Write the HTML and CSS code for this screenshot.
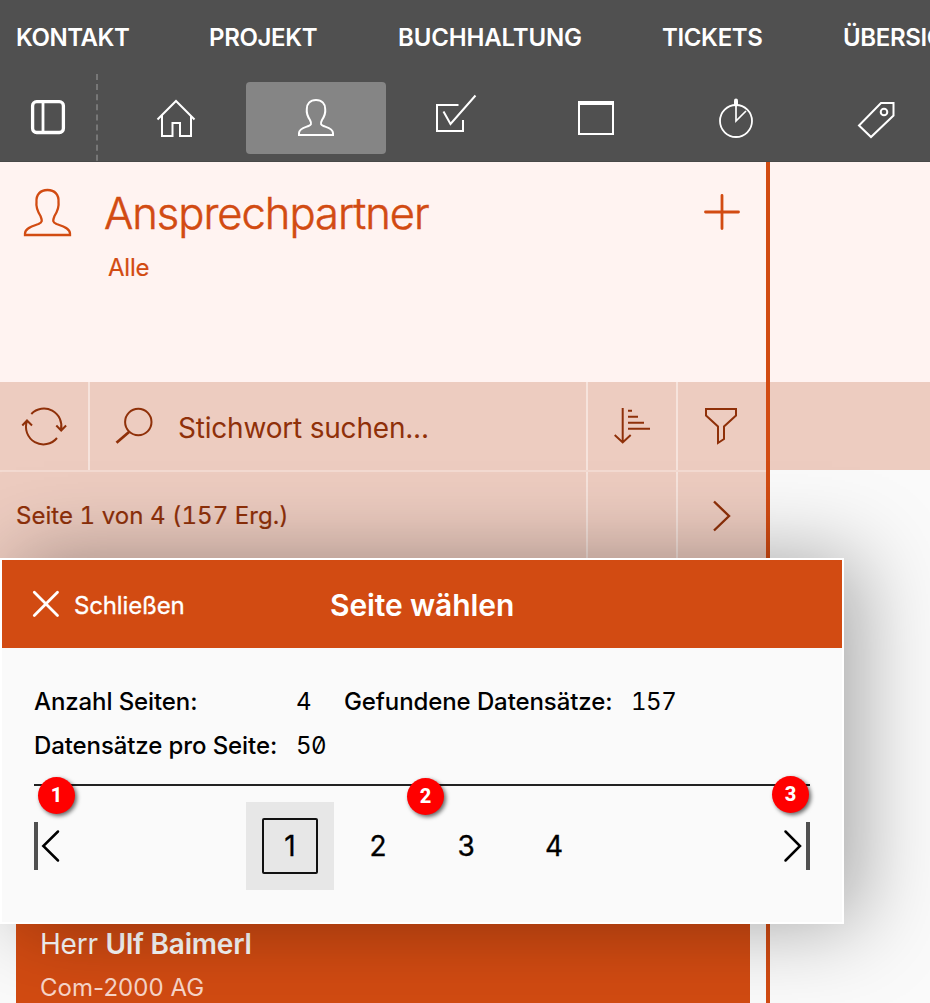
FILE: index.html
```html
<!DOCTYPE html>
<html lang="de">
<head>
<meta charset="utf-8">
<title>Ansprechpartner</title>
<link rel="stylesheet" href="styles.css">
</head>
<body>
<div class="app">
  <header class="topbar">
    <nav class="menu">
      <span class="menu-item kontakt">KONTAKT</span><span class="menu-item projekt">PROJEKT</span><span class="menu-item buchhaltung">BUCHHALTUNG</span><span class="menu-item tickets">TICKETS</span><span class="menu-item">ÜBERSICHT</span>
    </nav>
    <div class="tools">
      <div class="tool-side">
        <svg width="96" height="88" viewBox="0 74 96 88"><rect x="32.6" y="101.700" width="30.800" height="30.800" rx="4" stroke-width="3.300"/><path d="M43 102v30" stroke-width="2.800"/></svg>
      </div>
      <svg class="dashes" width="2" height="88"><path d="M1 0V88" stroke-dasharray="6 4.100"/></svg>
      <div class="tool"><svg viewBox="106 82 140 72"><path d="M157.500 119.500 176 101l18.500 18.500M162 115.500V136h10.500v-13h7.500v13H191v-20.500"/></svg></div>
      <div class="tool active"><svg viewBox="246 82 140 72"><path d="M316 100c-6 0-9.400 4-9.200 9-.5 4 1.200 8 3.200 11 2 4 1 5-1.500 6-4 1.500-9.500 2.700-9.500 7v2h34v-2c0-4.300-5.500-5.500-9.500-7-2.500-1-3.500-2-1.500-6 2-3 3.700-7 3.200-11 .2-5-3.200-9-9.200-9z"/></svg></div>
      <div class="tool"><svg viewBox="386 82 140 72"><path d="M458.500 105H437v26h26v-11M443.500 111.500l7 12.500 25-28.500"/></svg></div>
      <div class="tool"><svg viewBox="526 82 140 72"><path d="M579 102h34v32h-34zM578 103.500h36" /><path d="M578 103h36" stroke-width="4"/></svg></div>
      <div class="tool"><svg viewBox="666 82 140 72"><circle cx="736" cy="121" r="16" stroke-width="1.800"/><path d="M736 105v16l10-10" stroke-width="1.700"/><path d="M736 100.500v4" stroke-width="4" stroke-linecap="round"/></svg></div>
      <div class="tool"><svg viewBox="806 82 140 72"><path d="M881 103h12.500v12.500L871 137l-12-11.500z"/><circle cx="884" cy="112" r="3.300"/></svg></div>
    </div>
  </header>
  <main class="main">
    <section class="list">
      <div class="list-head">
        <svg class="person" width="96" height="90" viewBox="0 162 96 90"><path d="M47.500 190c-7.500 0-11.500 5-11 12-.7 5 1.500 10 4 14 2 5 2 6-2 8-5.500 2-13.500 4-13.500 9.500v1.500h45v-1.500c0-5.500-8-7.500-13.500-9.500-4-2-4-3-2-8 2.500-4 4.700-9 4-14 .5-7-3.500-12-11-12z"/></svg>
        <div class="titles"><h1 class="title">Ansprechpartner</h1><div class="subtitle">Alle</div></div>
        <svg class="plus" width="62" height="100" viewBox="704 162 62 100"><path d="M705.500 212h33M722 195.500v33"/></svg>
      </div>
      <div class="toolbar">
        <div class="cell"><svg width="88" height="88" viewBox="0 382 88 88"><path d="M31.300 414A17.500 17.500 0 0 1 61 430M56.300 425.500l4.900 5 4.900-5M57 438A17.500 17.500 0 0 1 27 421M22.300 425.500l4.700-5 5 5"/></svg></div>
        <div class="cell search"><svg width="88" height="88" viewBox="90 382 88 88"><circle cx="138.300" cy="422" r="13.200"/><path d="M129 432l-12.500 10.700" stroke-width="2.800"/></svg><span class="placeholder">Stichwort suchen...</span></div>
        <div class="cell"><svg width="88" height="88" viewBox="588 382 88 88"><path d="M622.700 408v35M614.700 435l8 7.500 8-7.500M628 410.700h4M628 416.700h10M628 422.700h16M628 428.700h22"/></svg></div>
        <div class="cell"><svg width="88" height="88" viewBox="678 382 88 88"><path d="M706 409h30v6.500l-12 11v12.500l-6 4v-16.500l-12-11z"/></svg></div>
      </div>
      <div class="pager">
        <div class="cell result">Seite 1 von 4 (157 Erg.)</div>
        <div class="cell"></div>
        <div class="cell"><svg width="88" height="88" viewBox="678 472 88 88"><path d="M714 501.500l15 14.500-15 14.500" stroke-width="2.400"/></svg></div>
      </div>
      <article class="card"><div class="card-name">Herr <b>Ulf Baimerl</b></div><div class="company">Com-2000 AG</div></article>
    </section>
    <section class="detail"><div class="detail-head"></div><div class="detail-bar"></div></section>
  </main>
  <section class="dialog">
    <header class="dialog-head">
      <svg width="56" height="88" viewBox="18 560 56 88"><path d="M34.300 592.300l23.200 23.200M57.500 592.300L34.300 615.500"/></svg>
      <span class="close">Schließen</span><h2 class="dialog-title">Seite wählen</h2>
    </header>
    <div class="dialog-body">
      <dl class="stats">
        <dt>Anzahl Seiten:</dt><dd>4</dd><dt>Gefundene Datensätze:</dt><dd>157</dd>
        <dt>Datensätze pro Seite:</dt><dd>50</dd>
      </dl>
      <div class="chooser">
        <svg width="32" height="48" viewBox="34 822 32 48"><path class="bar" d="M36 822v48"/><path d="M58 831.500L43.300 846l14.700 14.500"/></svg>
        <div class="pages-row"><div class="page current"><span class="page-box">1</span></div><div class="page">2</div><div class="page">3</div><div class="page">4</div></div>
        <svg width="32" height="48" viewBox="778 822 32 48"><path class="bar" d="M808 822v48"/><path d="M785.500 831.500L800 846l-14.500 14.500"/></svg>
      </div>
    </div>
    <span class="marker m1">1</span><span class="marker m2">2</span><span class="marker m3">3</span>
  </section>
</div>
</body>
</html>
```
FILE: styles.css
```css
* { box-sizing: border-box; }
body { margin: 0; font-family: Inter, "Liberation Sans", sans-serif; font-size: 24px; line-height: 30px; letter-spacing: -.1px; }
h1, h2, dl, dd { margin: 0; }
svg { display: block; flex: none; fill: none; stroke: currentColor; stroke-width: 2; }
.app { position: relative; width: 930px; height: 1003px; overflow: hidden; background: #fafafa; }

.topbar { height: 162px; background: #505050; color: #fff; border-bottom: 1px solid #484848; overflow: hidden; }
.menu { display: flex; height: 74px; padding: 2px 0 0 16px; align-items: center; font-weight: 600; white-space: nowrap; letter-spacing: -.35px; }
.menu-item { flex: none; }
.kontakt { width: 193px; letter-spacing: -.45px; }
.projekt { width: 189px; }
.buchhaltung { width: 264px; letter-spacing: -.15px; }
.tickets { width: 181px; }
.tools { display: flex; height: 88px; }
.tool-side { width: 96px; flex: none; }
.dashes { margin-right: 8px; color: #777; }
.tool { flex: none; width: 140px; height: 72px; margin-top: 8px; border-radius: 4px; }
.tool svg { width: 140px; height: 72px; }
.active { background: #858585; }

.main { display: flex; height: 841px; }
.list { width: 770px; flex: none; border-right: 4px solid #d24b12; }
.list-head { display: flex; height: 220px; background: #fff3f1; color: #d24b12; }
.list-head svg { stroke-width: 2.300; }
.titles { flex: 1; padding: 26px 0 0 8px; }
.title { font-size: 43.500px; line-height: 50px; font-weight: 300; letter-spacing: -1.020px; -webkit-text-stroke: .5px currentColor; }
.subtitle { margin: 15px 0 0 4px; letter-spacing: -.2px; -webkit-text-stroke: .2px currentColor; }
.list-head .plus { stroke-width: 2.800; stroke-linecap: round; }
.toolbar, .pager { display: grid; gap: 2px; background: #f6e3dc; color: #8f3009; }
.toolbar { grid-template-columns: 88px 1fr 88px 88px; height: 88px; }
.pager { grid-template-columns: 1fr 88px 88px; height: 90px; border-top: 2px solid #f3dad1; }
.cell { background: #edccc0; overflow: hidden; }
.search { display: flex; align-items: center; }
.placeholder { font-size: 28px; padding-top: 4px; letter-spacing: -.2px; }
.result { padding: 29px 0 0 16px; font-feature-settings: "tnum"; letter-spacing: .05px; -webkit-text-stroke: .2px currentColor; }
.card { height: 93px; margin: 350px 16px 0; padding: 17px 24px 0; background: #d24b12; color: #fff; }
.card-name { font-size: 28px; line-height: 34px; letter-spacing: -.200px; }
.card-name b { font-weight: 600; }
.company { margin-top: 12px; color: #f9d6c9; letter-spacing: .05px; }
.detail { flex: 1; }
.detail-head { height: 220px; background: #fff3f1; }
.detail-bar { height: 88px; background: #edccc0; }

/* The page chooser floats over the list. */
.dialog { position: absolute; left: 0; top: 558px; width: 844px; height: 366px; border: 2px solid #fff; background: #fafafa; box-shadow: 16px 0 80px rgba(0, 0, 0, .34); }
.dialog-head { display: flex; align-items: center; height: 88px; padding-left: 16px; background: #d24b12; color: #fff; }
.dialog-head svg { stroke-width: 2.800; stroke-linecap: round; }
.close { width: 256px; padding-top: 3px; letter-spacing: -.15px; -webkit-text-stroke: .3px currentColor; }
.dialog-title { font-size: 30px; line-height: 36px; font-weight: 600; padding-top: 2px; letter-spacing: -.1px; }
.dialog-body { padding: 32px; }
.stats { display: grid; grid-template-columns: 262px 48px 287px 1fr; height: 106px; border-bottom: 2px solid #222; line-height: 44px; grid-auto-rows: 44px; }
.stats dt { font-weight: 500; }
.stats dd { letter-spacing: -.5px; font-feature-settings: "tnum", "zero"; }
.chooser { display: flex; justify-content: space-between; margin-top: 16px; height: 88px; align-items: center; }
.chooser svg { stroke-width: 2.500; stroke-linecap: round; }
.chooser .bar { stroke: #505050; stroke-width: 4; stroke-linecap: butt; }
.pages-row { display: flex; }
.page { width: 88px; height: 88px; display: flex; align-items: center; justify-content: center; font-size: 28px; -webkit-text-stroke: .3px currentColor; }
.current { background: #e7e7e7; }
.page-box { width: 56px; height: 56px; border: 2px solid #111; border-radius: 2px; display: grid; place-items: center; }
.marker { position: absolute; width: 37px; height: 37px; border-radius: 50%; background: #f00; color: #fff; font-family: Roboto, sans-serif; font-size: 20px; line-height: 36px; font-weight: 800; text-align: center; box-shadow: 2px 2px 4px rgba(0, 0, 0, .6); }
.m1 { left: 36px; top: 217px; }
.m2 { left: 405px; top: 218px; }
.m3 { left: 770px; top: 216px; }
```
